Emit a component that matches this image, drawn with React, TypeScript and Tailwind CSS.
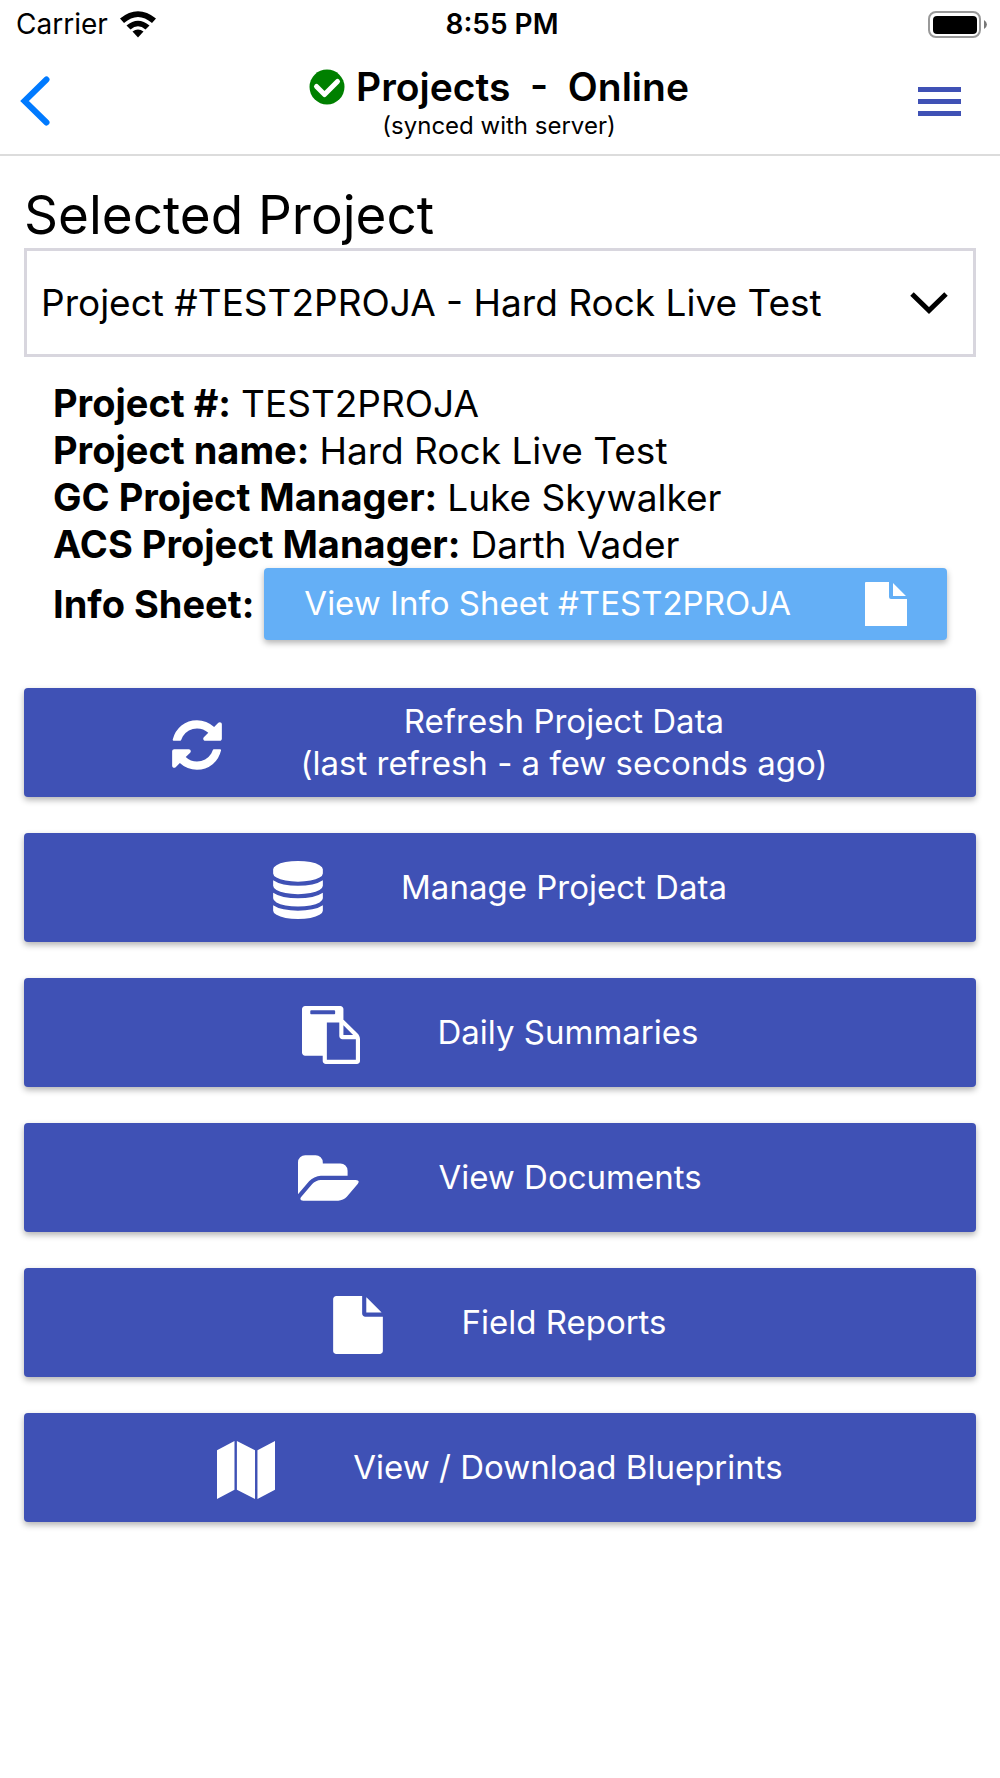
import type { ReactNode } from "react";

const icons = {
  refresh:
    "M1639 1056q0 5-1 7-64 268-268 434.500t-478 166.500q-146 0-282.500-55t-243.500-157l-129 129q-19 19-45 19t-45-19-19-45v-448q0-26 19-45t45-19h448q26 0 45 19t19 45-19 45l-137 137q71 66 161 102t187 36q134 0 250-65t186-179q11-17 53-117 8-23 30-23h192q13 0 22.500 9.500t9.500 22.500zm25-800v448q0 26-19 45t-45 19h-448q-26 0-45-19t-19-45 19-45l138-138q-148-137-349-137-134 0-250 65t-186 179q-11 17-53 117-8 23-30 23h-199q-13 0-22.500-9.500t-9.500-22.500v-7q65-268 270-434.500t480-166.500q146 0 284 55.500t245 156.500l130-129q19-19 45-19t45 19 19 45z",
  database:
    "M896 768q237 0 443-43t325-127v170q0 69-103 128t-280 93.500-385 34.500-385-34.500-280-93.500-103-128v-170q119 84 325 127t443 43zm0 768q237 0 443-43t325-127v170q0 69-103 128t-280 93.500-385 34.500-385-34.500-280-93.500-103-128v-170q119 84 325 127t443 43zm0-384q237 0 443-43t325-127v170q0 69-103 128t-280 93.500-385 34.500-385-34.500-280-93.500-103-128v-170q119 84 325 127t443 43zm0-1152q208 0 385 34.500t280 93.500 103 128v128q0 69-103 128t-280 93.500-385 34.500-385-34.500-280-93.500-103-128v-128q0-69 103-128t280-93.500 385-34.500z",
  paste:
    "M768 1664h896v-640h-416q-40 0-68-28t-28-68v-416h-384v1152zm256-1440v-64q0-13-9.500-22.500t-22.500-9.500h-704q-13 0-22.500 9.500t-9.500 22.500v64q0 13 9.500 22.500t22.500 9.500h704q13 0 22.500-9.500t9.500-22.500zm256 672h299l-299-299v299zm512 128v672q0 40-28 68t-68 28h-960q-40 0-68-28t-28-68v-160h-544q-40 0-68-28t-28-68v-1344q0-40 28-68t68-28h1088q40 0 68 28t28 68v328q21 13 36 28l408 408q28 28 48 76t20 88z",
  folder:
    "M1879 952q0 31-31 66l-336 396q-43 51-120.500 86.500t-143.500 35.500h-1088q-34 0-60.500-13t-26.500-43q0-31 31-66l336-396q43-51 120.500-86.500t143.500-35.500h1088q34 0 60.500 13t26.500 43zm-343-344v160h-832q-94 0-197 47.500t-164 119.500l-337 396-5 6q0-4-.5-12.500t-.5-12.500v-960q0-92 66-158t158-66h320q92 0 158 66t66 158v32h544q92 0 158 66t66 158z",
  file: "M1152 512v-472q22 14 36 28l408 408q14 14 28 36h-472zm-128 32q0 40 28 68t68 28h544v1056q0 40-28 68t-68 28h-1344q-40 0-68-28t-28-68v-1600q0-40 28-68t68-28h800v544z",
  map: "M0 285L540 0V1510L0 1792zM615 0L1175 285V1792L615 1510zM1250 285L1792 0V1510L1250 1792z",
};

const actions: { label: ReactNode; icon: keyof typeof icons; viewBox: string; size: string }[] = [
  {
    label: (
      <>
        Refresh Project Data
        <br />
        (last refresh - a few seconds ago)
      </>
    ),
    icon: "refresh",
    viewBox: "128 0 1536 1792",
    size: "w-[50px]",
  },
  { label: "Manage Project Data", icon: "database", viewBox: "128 0 1536 1792", size: "w-[50px]" },
  { label: "Daily Summaries", icon: "paste", viewBox: "0 0 1792 1792", size: "w-[58px]" },
  { label: "View Documents", icon: "folder", viewBox: "0 0 1920 1792", size: "w-[62px]" },
  { label: "Field Reports", icon: "file", viewBox: "128 0 1536 1792", size: "w-[50px]" },
  { label: "View / Download Blueprints", icon: "map", viewBox: "0 0 1792 1792", size: "w-[58px]" },
];

const details = [
  { term: "Project #:", value: "TEST2PROJA" },
  { term: "Project name:", value: "Hard Rock Live Test" },
  { term: "GC Project Manager:", value: "Luke Skywalker" },
  { term: "ACS Project Manager:", value: "Darth Vader" },
];

function StatusBar() {
  return (
    <div className="grid h-12 grid-cols-3 items-center pr-3 pl-4 text-[28px] leading-8">
      <div className="flex items-center gap-3">
        <span>Carrier</span>
        <svg viewBox="0 0 36 27" className="h-[27px] w-9" aria-hidden="true">
          <path d="M0 7.500Q18-7 36 7.500L32 12Q18 0 4 12z" />
          <path d="M6.500 14.500Q18 5 29.500 14.500L25.500 18.500Q18 12 10.500 18.500z" />
          <path d="M12.500 20.500Q18 16.500 23.500 20.500L18 26.500z" />
        </svg>
      </div>
      <div className="text-center font-semibold">8:55 PM</div>
      <svg viewBox="0 0 60 27" className="h-[27px] w-[60px] justify-self-end" aria-hidden="true">
        <rect x="1" y="1" width="51" height="25" rx="7" fill="none" stroke="#999" strokeWidth="2" />
        <rect x="5" y="5" width="44" height="18" rx="4" />
        <path d="M56 9Q59 11 59 13.500T56 18z" fill="#777" />
      </svg>
    </div>
  );
}

function Header() {
  return (
    <header className="flex h-[108px] items-center justify-between border-b-2 border-[#dcdcdc] pt-1 pr-[39px] pl-5">
      <button type="button" aria-label="Back" className="flex w-[60px] pb-1">
        <svg viewBox="0 0 30 50" className="h-[50px] w-[30px]" fill="none" stroke="#007aff" strokeWidth="6" strokeLinecap="round">
          <path d="M26.500 3.500L4.500 25L26.500 46.500" />
        </svg>
      </button>
      <div className="text-center">
        <h1 className="flex items-center justify-center gap-[11px] text-[39px] leading-[46px] font-semibold">
          <svg viewBox="0 0 36 36" className="size-9" aria-hidden="true">
            <circle cx="18" cy="18" r="17.500" fill="#008000" />
            <path d="M7.500 17.500L15.500 25.500L28.500 12.500" fill="none" stroke="#fff" strokeWidth="5" strokeLinecap="round" strokeLinejoin="round" />
          </svg>
          <span className="whitespace-pre">Projects  -  Online</span>
        </h1>
        <p className="text-2xl">(synced with server)</p>
      </div>
      <button type="button" aria-label="Menu" className="flex w-[43px] flex-col gap-[7px] pb-1">
        <span className="h-[5px] w-full bg-[#3f51b5]" />
        <span className="h-[5px] w-full bg-[#3f51b5]" />
        <span className="h-[5px] w-full bg-[#3f51b5]" />
      </button>
    </header>
  );
}

export default function App() {
  return (
    <div className="min-h-screen bg-white font-['Inter',sans-serif] text-black">
      <StatusBar />
      <Header />
      <main className="px-6 pt-[26px]">
        <label htmlFor="project" className="block text-[53px] leading-[66px]">
          Selected Project
        </label>
        <div className="relative">
          <select id="project" className="h-[109px] w-full appearance-none border-3 border-[#d8d6de] bg-white px-[14px] text-[37px]">
            <option>Project #TEST2PROJA - Hard Rock Live Test</option>
          </select>
          <svg viewBox="0 0 38 22" className="pointer-events-none absolute top-[44px] right-7 h-[22px] w-[38px]" fill="none" stroke="#000" strokeWidth="5">
            <path d="M2 2L19 18.500L36 2" />
          </svg>
        </div>

        <div className="px-[29px] pt-[23px] text-[37px]">
          <dl className="leading-[47px]">
            {details.map(({ term, value }) => (
              <div key={term} className="flex gap-[10px]">
                <dt className="text-[38px] font-bold">{term}</dt>
                <dd>{value}</dd>
              </div>
            ))}
          </dl>
          <div className="flex items-center gap-[10px]">
            <span className="text-[38px] font-bold whitespace-nowrap">Info Sheet:</span>
            <button
              type="button"
              className="flex h-[72px] flex-1 items-center justify-between rounded-sm bg-[#64aff6] px-10 text-[33px] whitespace-nowrap text-white shadow-[0_3px_6px_rgba(0,0,0,0.3)]"
            >
              View Info Sheet #TEST2PROJA
              <svg viewBox="0 0 42 44" className="h-11 w-[42px]" fill="currentColor" aria-hidden="true">
                <path d="M1 0H24V15Q24 17 26 17H42V44H0V1Q0 0 1 0zM28 1L41 14H28z" />
              </svg>
            </button>
          </div>
        </div>

        <div className="flex flex-col gap-9 pt-12">
          {actions.map(({ label, icon, viewBox, size }) => (
            <button
              key={icon}
              type="button"
              className="flex h-[109px] items-center justify-center gap-[78px] rounded-sm bg-[#3f51b5] text-[33px] leading-[42px] text-white shadow-[0_3px_6px_rgba(0,0,0,0.3)]"
            >
              <svg viewBox={viewBox} className={`mt-1 h-[58px] shrink-0 ${size}`} fill="currentColor" aria-hidden="true">
                <path d={icons[icon]} />
              </svg>
              <span className="pb-0.5">{label}</span>
            </button>
          ))}
        </div>
      </main>
    </div>
  );
}
